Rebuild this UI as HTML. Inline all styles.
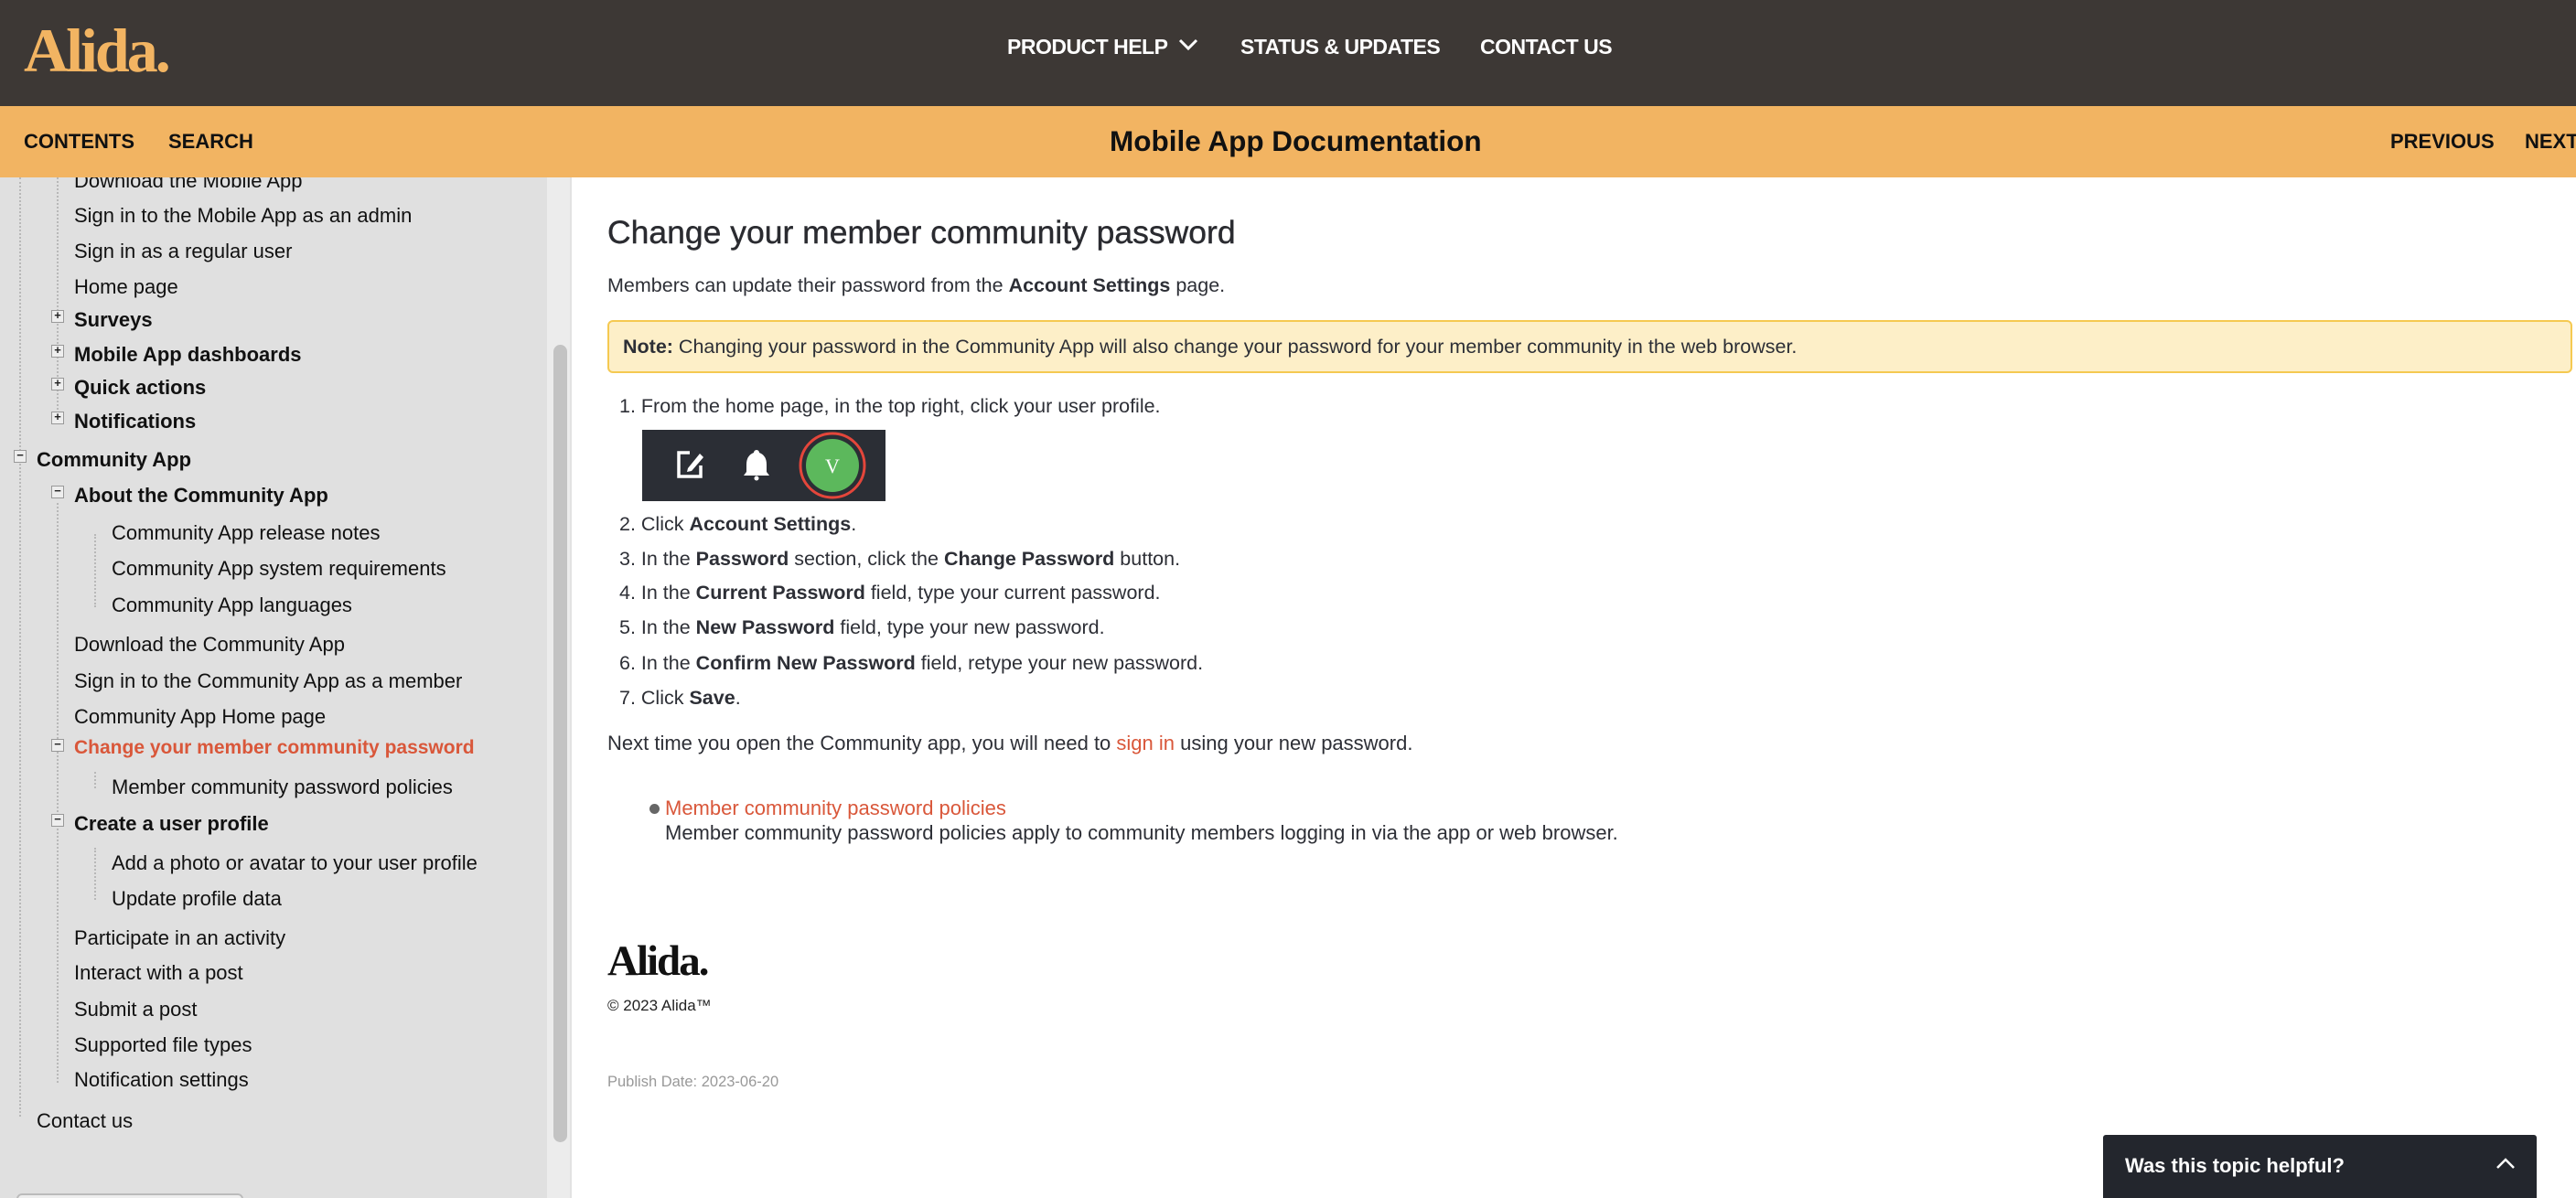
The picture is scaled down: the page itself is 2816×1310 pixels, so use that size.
<!DOCTYPE html>
<html><head><meta charset="utf-8"><style>
*{margin:0;padding:0;box-sizing:border-box}
body{width:2816px;height:1310px;overflow:hidden;background:#fff;font-family:"Liberation Sans",sans-serif;color:#2d2f36;position:relative}
.a{position:absolute;white-space:nowrap}
#top{position:absolute;left:0;top:0;width:2816px;height:116px;background:#3d3835}
#bar{position:absolute;left:0;top:116px;width:2816px;height:78px;background:#f2b462}
.nav{font-size:23px;font-weight:bold;color:#fff;top:38px;letter-spacing:-0.5px}
.bn{font-size:22px;font-weight:bold;color:#111;top:142px}
#side{position:absolute;left:0;top:194px;width:598px;height:1116px;background:#e0e0e0;overflow:hidden}
#track{position:absolute;left:598px;top:194px;width:27px;height:1116px;background:#ececec;border-right:2px solid #e2e2e2}
#thumb{position:absolute;left:605px;top:377px;width:15px;height:872px;background:#c3c3c3;border-radius:8px}
.s{position:absolute;white-space:nowrap;font-size:22px;color:#111}
.b{font-weight:bold;font-size:22px}
.vl{position:absolute;border-left:2px dotted #b8b8b8}
.bx{position:absolute;width:14px;height:14px;border:1.5px solid #999;background:#eee;font-size:13px;line-height:10px;text-align:center;color:#222;font-weight:bold}
.c{position:absolute;white-space:nowrap;font-size:21.5px;color:#2d2f36}
.org{color:#d9573a}
</style></head><body>
<div id="top"></div>
<div class="a" style="left:26px;top:16px;font-family:'Liberation Serif',serif;font-weight:bold;font-size:68px;letter-spacing:-3px;color:#f2b462">Alida.</div>
<div class="a nav" style="left:1101px">PRODUCT HELP <svg width="22" height="14" viewBox="0 0 22 14" style="margin-left:6px;vertical-align:3px"><path d="M2 2 L11 11 L20 2" stroke="#fff" stroke-width="3" fill="none"/></svg></div>
<div class="a nav" style="left:1356px">STATUS &amp; UPDATES</div>
<div class="a nav" style="left:1618px">CONTACT US</div>
<div id="bar"></div>
<div class="a bn" style="left:26px">CONTENTS</div>
<div class="a bn" style="left:184px">SEARCH</div>
<div class="a" style="left:1213px;top:136px;font-size:31.5px;font-weight:bold;color:#111">Mobile App Documentation</div>
<div class="a bn" style="left:2613px">PREVIOUS</div>
<div class="a bn" style="left:2760px">NEXT</div>

<div id="side">
<div class="vl" style="left:21px;top:0;height:1027px"></div>
<div class="vl" style="left:62px;top:0;height:262px"></div>
<div class="vl" style="left:62px;top:356px;height:634px"></div>
<div class="vl" style="left:103px;top:390px;height:80px"></div>
<div class="vl" style="left:103px;top:650px;height:18px"></div>
<div class="vl" style="left:103px;top:733px;height:57px"></div>
</div>
<div style="position:absolute;left:0;top:194px;width:598px;height:1116px;overflow:hidden">
<div class="s" style="left:81px;top:-9px">Download the Mobile App</div>
<div class="s" style="left:81px;top:29px">Sign in to the Mobile App as an admin</div>
<div class="s" style="left:81px;top:68px">Sign in as a regular user</div>
<div class="s" style="left:81px;top:107px">Home page</div>
<div class="bx" style="left:56px;top:145px">+</div><div class="s b" style="left:81px;top:143px">Surveys</div>
<div class="bx" style="left:56px;top:183px">+</div><div class="s b" style="left:81px;top:181px">Mobile App dashboards</div>
<div class="bx" style="left:56px;top:219px">+</div><div class="s b" style="left:81px;top:217px">Quick actions</div>
<div class="bx" style="left:56px;top:256px">+</div><div class="s b" style="left:81px;top:254px">Notifications</div>
<div class="bx" style="left:15px;top:298px">−</div><div class="s b" style="left:40px;top:296px">Community App</div>
<div class="bx" style="left:56px;top:337px">−</div><div class="s b" style="left:81px;top:335px">About the Community App</div>
<div class="s" style="left:122px;top:376px">Community App release notes</div>
<div class="s" style="left:122px;top:415px">Community App system requirements</div>
<div class="s" style="left:122px;top:455px">Community App languages</div>
<div class="s" style="left:81px;top:498px">Download the Community App</div>
<div class="s" style="left:81px;top:538px">Sign in to the Community App as a member</div>
<div class="s" style="left:81px;top:577px">Community App Home page</div>
<div class="bx" style="left:56px;top:614px">−</div><div class="s b org" style="left:81px;top:612px;font-size:21px">Change your member community password</div>
<div class="s" style="left:122px;top:654px">Member community password policies</div>
<div class="bx" style="left:56px;top:696px">−</div><div class="s b" style="left:81px;top:694px">Create a user profile</div>
<div class="s" style="left:122px;top:737px">Add a photo or avatar to your user profile</div>
<div class="s" style="left:122px;top:776px">Update profile data</div>
<div class="s" style="left:81px;top:819px">Participate in an activity</div>
<div class="s" style="left:81px;top:857px">Interact with a post</div>
<div class="s" style="left:81px;top:897px">Submit a post</div>
<div class="s" style="left:81px;top:936px">Supported file types</div>
<div class="s" style="left:81px;top:974px">Notification settings</div>
<div class="s" style="left:40px;top:1019px">Contact us</div>
<div style="position:absolute;left:18px;top:1111px;width:248px;height:20px;border:2px solid #bbb;border-radius:6px;background:#eee"></div>
</div>
<div id="track"></div>
<div id="thumb"></div>

<div class="a" style="left:664px;top:234px;font-size:35.5px;color:#2a2b30;-webkit-text-stroke:0.4px #2a2b30">Change your member community password</div>
<div class="c" style="left:664px;top:300px">Members can update their password from the <b>Account Settings</b> page.</div>
<div style="position:absolute;left:664px;top:350px;width:2148px;height:58px;background:#fdefc8;border:2px solid #f5c951;border-radius:6px"></div>
<div class="c" style="left:681px;top:367px;font-size:21.5px"><b>Note:</b> Changing your password in the Community App will also change your password for your member community in the web browser.</div>
<div class="c" style="left:677px;top:432px">1. From the home page, in the top right, click your user profile.</div>
<svg class="a" style="left:702px;top:470px" width="266" height="78" viewBox="0 0 266 78">
<rect width="266" height="78" fill="#2b2e35"/>
<path d="M52 25 H40 V51 H64 V39" stroke="#fff" stroke-width="3.5" fill="none"/>
<path d="M50 42 L63 26 L67 30 L54 45 L49 46 Z" fill="#fff"/>
<path d="M122 25 a3 3 0 0 1 6 0 q8 3 8 13 v8 l3 4 h-28 l3 -4 v-8 q0 -10 8 -13z" fill="#fff"/>
<circle cx="125" cy="53" r="2.5" fill="#fff"/>
<circle cx="208" cy="39" r="35" fill="none" stroke="#e4463b" stroke-width="3"/>
<circle cx="208" cy="39" r="29" fill="#5cb85c"/>
<text x="208" y="47" text-anchor="middle" font-family="Liberation Serif,serif" font-size="22" fill="#fff">V</text>
</svg>
<div class="c" style="left:677px;top:561px">2. Click <b>Account Settings</b>.</div>
<div class="c" style="left:677px;top:599px">3. In the <b>Password</b> section, click the <b>Change Password</b> button.</div>
<div class="c" style="left:677px;top:636px">4. In the <b>Current Password</b> field, type your current password.</div>
<div class="c" style="left:677px;top:674px">5. In the <b>New Password</b> field, type your new password.</div>
<div class="c" style="left:677px;top:713px">6. In the <b>Confirm New Password</b> field, retype your new password.</div>
<div class="c" style="left:677px;top:751px">7. Click <b>Save</b>.</div>
<div class="c" style="left:664px;top:800px;font-size:22px">Next time you open the Community app, you will need to <span class="org">sign in</span> using your new password.</div>
<div class="a" style="left:710px;top:879px;width:11px;height:11px;border-radius:50%;background:#666"></div>
<div class="c org" style="left:727px;top:871px;font-size:22px">Member community password policies</div>
<div class="c" style="left:727px;top:898px;font-size:22px">Member community password policies apply to community members logging in via the app or web browser.</div>
<div class="a" style="left:664px;top:1024px;font-family:'Liberation Serif',serif;font-weight:bold;font-size:47px;letter-spacing:-2px;color:#111">Alida.</div>
<div class="a" style="left:664px;top:1090px;font-size:17px;color:#222">© 2023 Alida™</div>
<div class="a" style="left:664px;top:1174px;font-size:16.5px;color:#999">Publish Date: 2023-06-20</div>
<div style="position:absolute;left:2299px;top:1241px;width:474px;height:69px;background:#23262d;border-radius:3px 3px 0 0"></div>
<div class="a" style="left:2323px;top:1262px;font-size:22px;font-weight:bold;color:#fff">Was this topic helpful?</div>
<svg class="a" style="left:2728px;top:1264px" width="22" height="16" viewBox="0 0 22 16"><path d="M2 13 L11 4 L20 13" stroke="#fff" stroke-width="2.5" fill="none"/></svg>
</body></html>
